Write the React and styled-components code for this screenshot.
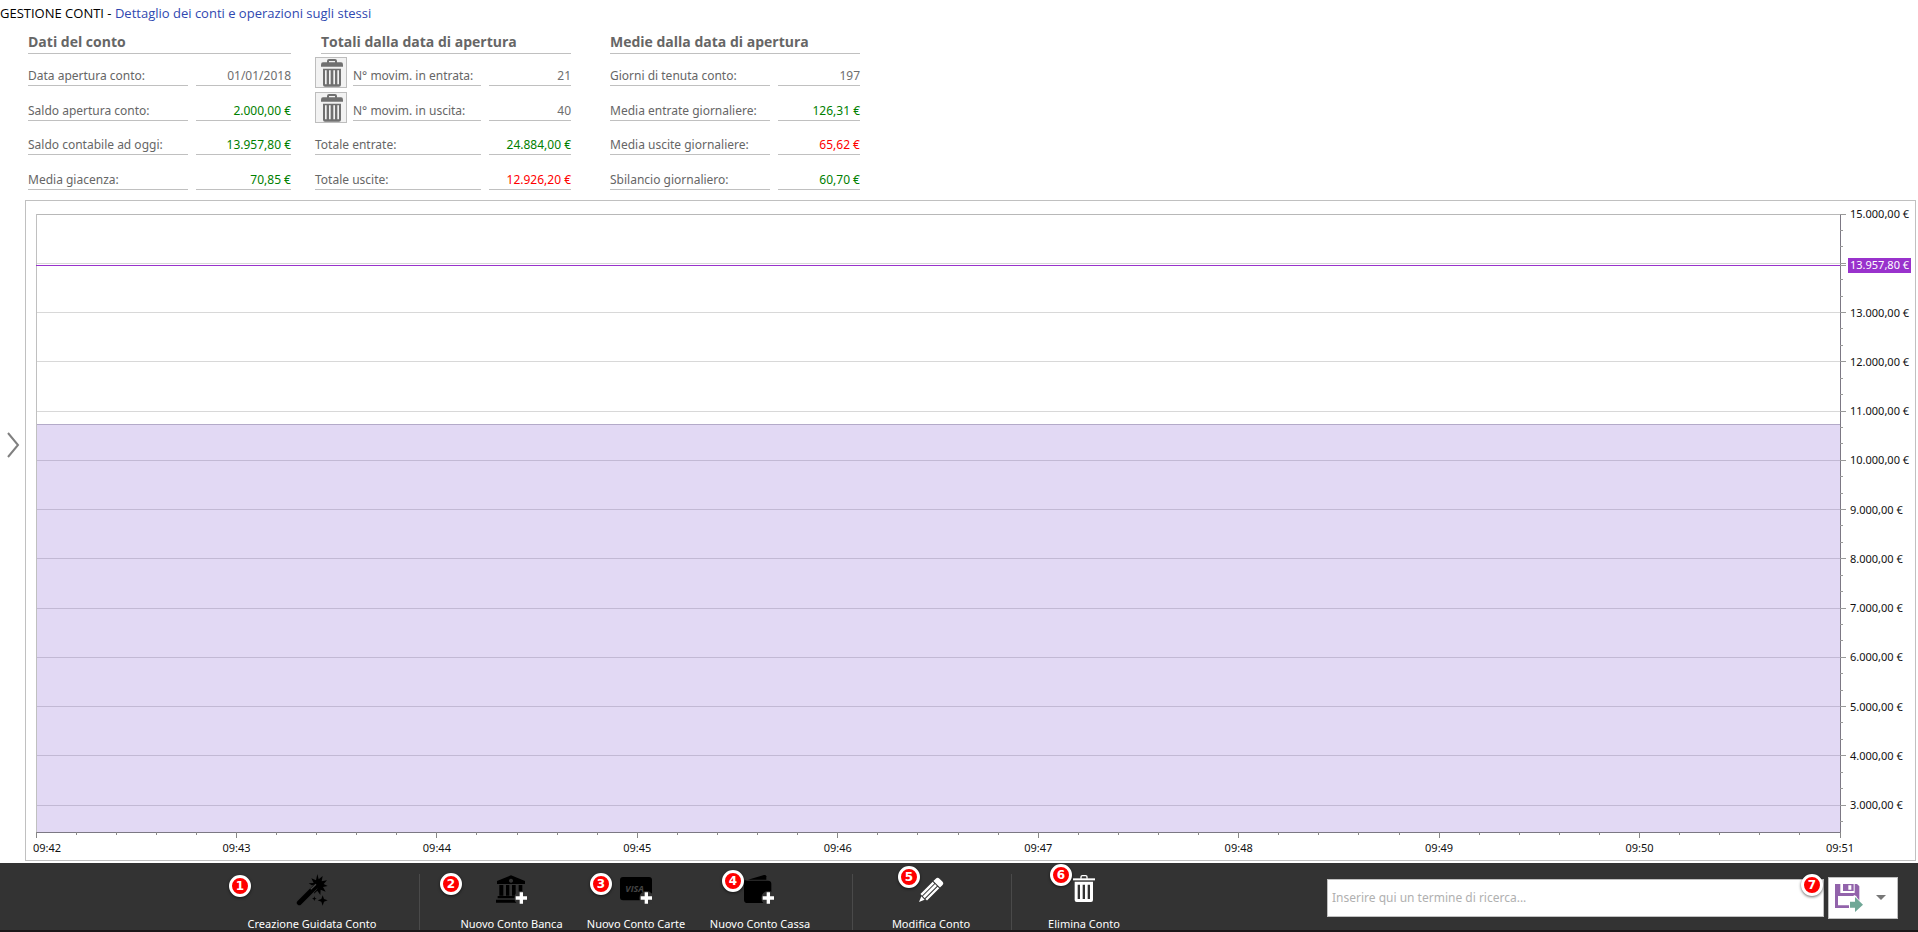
import React from "react";
import styled, { createGlobalStyle } from "styled-components";

const GlobalStyle = createGlobalStyle`
  * {
    box-sizing: border-box;
  }

  body {
    margin: 0;
    background: #fff;
    font-family: "Noto Sans", "Open Sans", sans-serif;
    font-size: 12px;
    color: #666;
  }

  button,
  input {
    font: inherit;
  }
`;

const Page = styled.div`
  display: flex;
  flex-direction: column;
  min-height: 100vh;
`;

const Title = styled.h1`
  margin: 0;
  padding-top: 3px;
  height: 25px;
  font-family: "Open Sans", sans-serif;
  font-size: 13px;
  font-weight: 400;
  line-height: 20px;
  color: #000;

  span {
    color: #3048b0;
  }
`;

const Body = styled.main`
  flex: 1;
  display: flex;
`;

const Expander = styled.button`
  width: 25px;
  padding: 2px 0 0 7px;
  border: 0;
  background: none;
  cursor: pointer;

  svg {
    display: block;
  }
`;

const Content = styled.div`
  flex: 1;
  min-width: 0;
  display: flex;
  flex-direction: column;
`;

const Summary = styled.div`
  display: flex;
  padding: 4px 0 10px 3px;
`;

const Panel = styled.section`
  width: ${(p) => p.$width}px;
  margin-right: ${(p) => p.$gap || 0}px;
`;

const PanelTitle = styled.h2`
  margin: 0 0 0 ${(p) => p.$indent || 0}px;
  padding-top: 3px;
  height: 25px;
  border-bottom: 1px solid #c0c0c0;
  font-family: "Open Sans", sans-serif;
  font-size: 14px;
  font-weight: 700;
  line-height: 20px;
  white-space: nowrap;
`;

const Rows = styled.dl`
  display: grid;
  grid-template-rows: 32px 35px 34px 35px;
  margin: 0;
`;

const Row = styled.div`
  display: flex;
  align-items: flex-end;
`;

const Label = styled.dt`
  flex: 1;
  border-bottom: 1px solid #c0c0c0;
  line-height: 18px;
  white-space: nowrap;
`;

const tones = { green: "#008000", red: "#ff0000", grey: "#6e6e6e" };

const Value = styled.dd`
  width: ${(p) => p.$width}px;
  margin: 0 0 0 8px;
  border-bottom: 1px solid #c0c0c0;
  line-height: 18px;
  text-align: right;
  white-space: nowrap;
  color: ${(p) => tones[p.$tone]};
`;

const TrashButton = styled.button`
  width: 32px;
  height: 31px;
  margin: 0 6px -2px 0;
  padding: 0 0 0 2px;
  display: flex;
  align-items: center;
  justify-content: center;
  border: 1px solid #bdbdbd;
  background: #f2f2f2;
  color: #707070;
  cursor: pointer;
`;

const ChartFrame = styled.section`
  flex: 1;
  display: flex;
  margin: 0 2px 2px 0;
  padding: 13px 75px 28px 10px;
  border: 1px solid #c0c0c0;
`;

const Plot = styled.svg`
  flex: 1;
  min-width: 0;
  height: auto;
  overflow: visible;
  shape-rendering: crispEdges;
  font-size: 11px;

  text {
    fill: #111;
  }
`;

const Toolbar = styled.footer`
  display: flex;
  height: 69px;
  background: #333;
  border-bottom: 2px solid #1b1819;
`;

const ToolGroup = styled.div`
  display: flex;
  margin-top: 11px;
  padding: 0 ${(p) => p.$right}px 0 ${(p) => p.$left}px;
  border-right: ${(p) => (p.$last ? 0 : 1)}px solid #4a4a4a;
`;

const Tool = styled.button`
  position: relative;
  width: ${(p) => p.$width}px;
  padding: 0;
  border: 0;
  background: none;
  color: #fff;
  font-size: 11px;
  line-height: 12px;
  white-space: nowrap;
  cursor: pointer;
  display: flex;
  flex-direction: column;
  align-items: center;
  justify-content: space-between;
`;

const Badge = styled.span`
  position: absolute;
  left: ${(p) => p.$x}px;
  top: ${(p) => p.$y}px;
  width: 22px;
  height: 22px;
  border: 3px solid #fff;
  border-radius: 50%;
  background: #f00;
  box-shadow: 0 1px 3px rgba(0, 0, 0, 0.6);
  color: #fff;
  font: 700 12px/16px "DejaVu Sans", sans-serif;
  text-align: center;
`;

const SearchArea = styled.form`
  flex: 1;
  display: flex;
  align-items: center;
  justify-content: flex-end;
  gap: 4px;
  padding: 2px 20px 0 40px;
`;

const SearchBox = styled.div`
  position: relative;
  flex: 0 1 497px;
`;

const SearchInput = styled.input`
  display: block;
  width: 100%;
  height: 38px;
  padding: 0 4px;
  border: 1px solid #c0c0c0;
  border-radius: 0;
  background: #fff;
  color: #333;
  outline: 0;

  &::placeholder {
    color: #b0b0b0;
    opacity: 1;
  }
`;

const SaveButton = styled.button`
  width: 70px;
  height: 42px;
  padding: 0 11px 0 6px;
  display: flex;
  align-items: center;
  justify-content: space-between;
  border: 1px solid #c0c0c0;
  background: #fff;
  cursor: pointer;
`;

const panels = [
  {
    title: "Dati del conto",
    width: 263,
    gap: 24,
    valueWidth: 95,
    rows: [
      { label: "Data apertura conto:", value: "01/01/2018", tone: "grey" },
      { label: "Saldo apertura conto:", value: "2.000,00 €", tone: "green" },
      { label: "Saldo contabile ad oggi:", value: "13.957,80 €", tone: "green" },
      { label: "Media giacenza:", value: "70,85 €", tone: "green" },
    ],
  },
  {
    title: "Totali dalla data di apertura",
    width: 256,
    gap: 39,
    indent: 6,
    valueWidth: 82,
    rows: [
      { label: "N° movim. in entrata:", value: "21", tone: "grey", trash: "Elimina entrate" },
      { label: "N° movim. in uscita:", value: "40", tone: "grey", trash: "Elimina uscite" },
      { label: "Totale entrate:", value: "24.884,00 €", tone: "green" },
      { label: "Totale uscite:", value: "12.926,20 €", tone: "red" },
    ],
  },
  {
    title: "Medie dalla data di apertura",
    width: 250,
    valueWidth: 82,
    rows: [
      { label: "Giorni di tenuta conto:", value: "197", tone: "grey" },
      { label: "Media entrate giornaliere:", value: "126,31 €", tone: "green" },
      { label: "Media uscite giornaliere:", value: "65,62 €", tone: "red" },
      { label: "Sbilancio giornaliero:", value: "60,70 €", tone: "green" },
    ],
  },
];

const TrashIcon = () => (
  <svg width="22" height="28" viewBox="0 0 66 84" fill="currentColor" aria-hidden="true">
    <path d="M18 12V6q0-6 6-6h18q6 0 6 6v6h-6V6H24v6z" />
    <path d="M0 23v-6q0-7 6-7h54q6 0 6 7v6z" />
    <path
      fillRule="evenodd"
      d="M6 29h54v48q0 6-6 6H12q-6 0-6-6zM12 34v42h5V34zM24 34v42h5V34zM37 34v42h5V34zM49 34v42h5V34z"
    />
  </svg>
);

const TrashWhiteIcon = () => (
  <svg width="22" height="32" viewBox="0 0 66 96" fill="#fff" aria-hidden="true">
    <path d="M22 14V9q0-6 6-6h10q6 0 6 6v5h-4V9q0-2-2-2H28q-2 0-2 2v5z" />
    <path d="M0 13h66v6H0z" />
    <path
      fillRule="evenodd"
      d="M5 23h55v55q0 6-6 6H11q-6 0-6-6zM14 32v43h7V32zM29 32v43h7V32zM44 32v43h7V32z"
    />
  </svg>
);

const Plus = ({ x }) => (
  <>
    <circle cx={x} cy="72" r="21" fill="#333" />
    <path d={`M${x - 17} 67h12v-12h10v12h12v10h-12v12h-10v-12h-12z`} fill="#fff" />
  </>
);

const WandIcon = () => (
  <svg width="32" height="32" viewBox="0 0 96 96" aria-hidden="true">
    <path d="M64 0l4 16 12-10-3 16 16-3-10 11 12 6-14 3 8 14-15-6-1 16-9-13-10 9 2-15-16 2 11-10-13-8 15-1-7-14 14 6z" />
    <path d="M10 86L54 42" stroke="#333" strokeWidth="19" strokeLinecap="round" />
    <path d="M10 86L58 38" stroke="#000" strokeWidth="15" strokeLinecap="round" />
    <path d="M44 46L60 31" stroke="#444" strokeWidth="4" />
    <path d="M80 64l4 11 11 4-11 4-4 12-4-12-11-4 11-4z" />
    <path d="M55 67l2 5 5 2-5 2-2 5-2-5-5-2 5-2z" />
  </svg>
);

const BankIcon = () => (
  <svg width="32" height="32" viewBox="0 0 96 96" aria-hidden="true">
    <path fillRule="evenodd" d="M45 4l42 17v9H3v-9zM45 14a6 6 0 1 0 .1 0z" />
    <path d="M10 33h12v32h-12zM30 33h10v32h-10zM48 33h11v32h-11zM68 33h11v32h-11z" />
    <path d="M5 66h78v7H5zM0 77h88v9H0z" />
    <Plus x={76} />
  </svg>
);

const CardIcon = () => (
  <svg width="32" height="32" viewBox="0 0 96 96" aria-hidden="true">
    <rect y="9" width="96" height="70" rx="9" />
    <text x="16" y="54" fill="#444" fontFamily="Open Sans" fontSize="27" fontWeight="700" fontStyle="italic">
      VISA
    </text>
    <Plus x={79} />
  </svg>
);

const WalletIcon = () => (
  <svg width="32" height="32" viewBox="0 0 96 96" aria-hidden="true">
    <path d="M12 17L60 3q6-1 7 4v10z" />
    <path d="M2 17q4 4 10 3h60q10 0 10 9v48q0 10-10 10H11Q0 87 0 77V24z" />
    <Plus x={73} />
  </svg>
);

const PencilIcon = () => (
  <svg width="32" height="32" viewBox="0 0 96 96" aria-hidden="true">
    <g transform="translate(12 84) rotate(-45)" fill="#fff">
      <path d="M0 0l17-7v14z" />
      <path d="M20-14h52v7H20zM20-4h52v8H20zM20 7h52v7H20z" />
      <path d="M75-14h10q8 0 8 8v12q0 8-8 8H75z" />
    </g>
  </svg>
);

const SaveIcon = () => (
  <svg width="28" height="28" viewBox="0 0 84 84" aria-hidden="true">
    <path
      fill="#9263ab"
      fillRule="evenodd"
      d="M0 0h16v27h43V0h7l7 7v65H0zM9 36v28h55V36z"
    />
    <path fill="#9263ab" fillRule="evenodd" d="M24 0h32v21H24zM40 4v13h9V4z" />
    <path fill="#fff" d="M42 48h14v-14h4l24 28-24 24H42z" />
    <path fill="#6fa796" d="M45 53h15V39l24 23-24 22V71H45z" />
  </svg>
);

const Chevron = () => (
  <svg width="13" height="26" viewBox="0 0 13 26" fill="none" stroke="#808080" strokeWidth="2" aria-hidden="true">
    <path d="M1 1l10 12L1 25" />
  </svg>
);

const MIN = 2452;
const MAX = 15000;
const BALANCE = 13957.8;
const AVERAGE = 10736;

const yOf = (value) => `${((MAX - value) / (MAX - MIN)) * 100}%`;
const euro = (thousands) => `${thousands}.000,00 €`;

const majors = Array.from({ length: 13 }, (_, i) => 15 - i);
const minors = Array.from({ length: 38 }, (_, i) => 15000 - (i * 1000) / 3).filter((v) => v > MIN);
const times = Array.from({ length: 10 }, (_, i) => `09:${42 + i}`);
const timeTicks = Array.from({ length: 46 }, (_, i) => i);

const BalanceChart = () => (
  <ChartFrame>
    <Plot role="img" aria-label="Andamento del saldo">
      {majors.map((k) => (
        <line key={k} x1="0" x2="100%" y1={yOf(k * 1000)} y2={yOf(k * 1000)} stroke={k === 15 ? "#b8b8b8" : "#d8d8d8"} />
      ))}
      <svg y={yOf(AVERAGE)} height={yOf(MAX - AVERAGE + MIN)}>
        <rect width="100%" height="100%" fill="rgba(110, 65, 200, 0.2)" />
        <line x2="100%" stroke="#b3aac8" strokeWidth="2" />
      </svg>
      <line y2="100%" stroke="#c0c0c0" />
      <line x2="100%" y1="100%" y2="100%" stroke="#7c7884" />
      <line x1="100%" x2="100%" y2="100%" stroke="#7c7884" />
      <line x2="100%" y1={yOf(BALANCE)} y2={yOf(BALANCE)} stroke="#9932cc" />

      {minors.map((v) => (
        <svg key={v} x="100%" y={yOf(v)} overflow="visible">
          <line x2="3" stroke="#999" />
        </svg>
      ))}
      {majors.map((k) => (
        <svg key={k} x="100%" y={yOf(k * 1000)} overflow="visible">
          <line x2="6" stroke="#999" />
          {k !== 14 && (
            <text x="10" y="4">
              {euro(k)}
            </text>
          )}
        </svg>
      ))}
      <svg x="100%" y={yOf(BALANCE)} overflow="visible">
        <line x2="6" stroke="#999" />
        <rect x="8" y="-7" width="63" height="15" fill="#9932cc" />
        <text x="10" y="4" style={{ fill: "#fff" }}>
          13.957,80 €
        </text>
      </svg>

      {timeTicks.map((t) => (
        <svg key={t} x={`${(t / 45) * 100}%`} y="100%" overflow="visible">
          <line y2={t % 5 ? 3 : 6} stroke="#888" />
        </svg>
      ))}
      {times.map((time, i) => (
        <svg key={time} x={`${(i / 9) * 100}%`} y="100%" overflow="visible">
          <text x={i ? 0 : -3} y="20" textAnchor={i ? "middle" : "start"}>
            {time}
          </text>
        </svg>
      ))}
    </Plot>
  </ChartFrame>
);

const ToolItem = ({ icon, label, width, badge, x, y }) => (
  <Tool type="button" $width={width}>
    {icon}
    {label}
    <Badge $x={x} $y={y}>
      {badge}
    </Badge>
  </Tool>
);

const App = () => (
  <Page>
    <GlobalStyle />
    <Title>
      GESTIONE CONTI - <span>Dettaglio dei conti e operazioni sugli stessi</span>
    </Title>
    <Body>
      <Expander type="button" aria-label="Mostra elenco conti">
        <Chevron />
      </Expander>
      <Content>
        <Summary>
          {panels.map((panel) => (
            <Panel key={panel.title} $width={panel.width} $gap={panel.gap}>
              <PanelTitle $indent={panel.indent}>{panel.title}</PanelTitle>
              <Rows>
                {panel.rows.map((row) => (
                  <Row key={row.label}>
                    {row.trash && (
                      <TrashButton type="button" aria-label={row.trash}>
                        <TrashIcon />
                      </TrashButton>
                    )}
                    <Label>{row.label}</Label>
                    <Value $width={panel.valueWidth} $tone={row.tone}>
                      {row.value}
                    </Value>
                  </Row>
                ))}
              </Rows>
            </Panel>
          ))}
        </Summary>
        <BalanceChart />
      </Content>
    </Body>
    <Toolbar>
      <ToolGroup $left={242} $right={37}>
        <ToolItem icon={<WandIcon />} label="Creazione Guidata Conto" width={140} badge="1" x={-13} y={1} />
      </ToolGroup>
      <ToolGroup $left={29} $right={30}>
        <ToolItem icon={<BankIcon />} label="Nuovo Conto Banca" width={125} badge="2" x={-9} y={-1} />
        <ToolItem icon={<CardIcon />} label="Nuovo Conto Carte" width={124} badge="3" x={16} y={-1} />
        <ToolItem icon={<WalletIcon />} label="Nuovo Conto Cassa" width={124} badge="4" x={24} y={-4} />
      </ToolGroup>
      <ToolGroup $left={28} $right={30}>
        <ToolItem icon={<PencilIcon />} label="Modifica Conto" width={100} badge="5" x={17} y={-8} />
      </ToolGroup>
      <ToolGroup $left={22} $right={0} $last>
        <ToolItem icon={<TrashWhiteIcon />} label="Elimina Conto" width={100} badge="6" x={16} y={-10} />
      </ToolGroup>
      <SearchArea>
        <SearchBox>
          <SearchInput type="text" aria-label="Ricerca" placeholder="Inserire qui un termine di ricerca..." />
          <Badge $x={474} $y={-5}>
            7
          </Badge>
        </SearchBox>
        <SaveButton type="button" aria-label="Salva">
          <SaveIcon />
          <svg width="10" height="5" viewBox="0 0 10 5" fill="#777" aria-hidden="true">
            <path d="M0 0h10L5 5z" />
          </svg>
        </SaveButton>
      </SearchArea>
    </Toolbar>
  </Page>
);

export default App;
